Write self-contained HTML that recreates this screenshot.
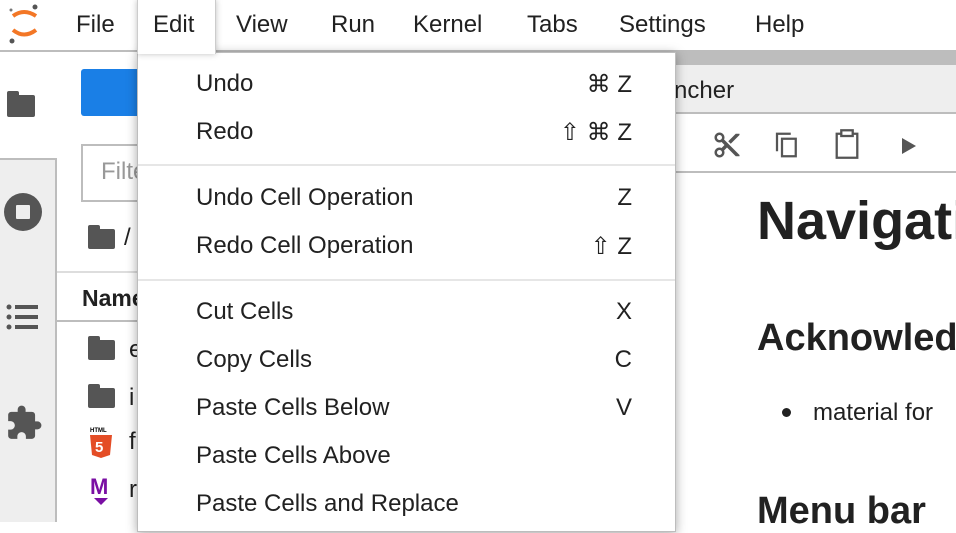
<!DOCTYPE html>
<html><head><meta charset="utf-8"><style>
*{margin:0;padding:0;box-sizing:border-box}
body{width:956px;height:522px;overflow:hidden;position:relative;background:#fff;font-family:"Liberation Sans","DejaVu Sans",sans-serif;color:#212121}
.a{position:absolute}
.mt{position:absolute;top:11px;font-size:24px;color:#212121}
.mi{position:absolute;left:196px;font-size:24px;color:#212121;white-space:nowrap}
.sc{position:absolute;font-size:24px;color:#212121;text-align:right;white-space:nowrap}
.fold{position:absolute;width:28px;height:22px;background:#555;border-radius:2px}
.fold:before{content:"";position:absolute;left:0;top:-4px;width:12px;height:6px;background:#555;border-radius:2px 2px 0 0}
</style></head><body>
<div class="a" style="left:0;top:0;width:956px;height:52px;background:#fff;border-bottom:2px solid #bdbdbd"></div>
<svg class="a" style="left:6px;top:2px" width="36" height="44" viewBox="0 0 36 44">
<path d="M7 14 Q18 6 30 14" stroke="#f37726" stroke-width="4" fill="none"/>
<path d="M7 28 Q18 37 30 28" stroke="#f37726" stroke-width="4" fill="none"/>
<circle cx="29" cy="5" r="2.5" fill="#555"/><circle cx="5" cy="8" r="1.5" fill="#777"/><circle cx="6" cy="39" r="2.5" fill="#555"/>
</svg>
<div class="mt" style="left:76px">File</div>
<div class="a" style="left:137px;top:0;width:79px;height:54px;background:#fff;border-left:1px solid #ccc;border-right:1px solid #ccc;box-shadow:0 0 6px rgba(0,0,0,.25);z-index:3"></div>
<div class="mt" style="left:153px;z-index:4">Edit</div>
<div class="mt" style="left:236px">View</div>
<div class="mt" style="left:331px">Run</div>
<div class="mt" style="left:413px">Kernel</div>
<div class="mt" style="left:527px">Tabs</div>
<div class="mt" style="left:619px">Settings</div>
<div class="mt" style="left:755px">Help</div>
<div class="a" style="left:0;top:158px;width:57px;height:364px;background:#eee;border-right:2px solid #bdbdbd;border-top:2px solid #bdbdbd"></div>
<div class="fold" style="left:7px;top:95px"></div>
<svg class="a" style="left:3px;top:192px" width="40" height="40"><circle cx="20" cy="20" r="19" fill="#555"/><rect x="13" y="13" width="14" height="14" fill="#eee" rx="1"/></svg>
<svg class="a" style="left:6px;top:304px" width="34" height="26"><g fill="#555"><circle cx="3" cy="3" r="2.5"/><circle cx="3" cy="13" r="2.5"/><circle cx="3" cy="23" r="2.5"/><rect x="9" y="1" width="23" height="4"/><rect x="9" y="11" width="23" height="4"/><rect x="9" y="21" width="23" height="4"/></g></svg>
<svg class="a" style="left:5px;top:404px" width="38" height="38" viewBox="0 0 24 24"><path fill="#555" d="M20.5 11H19V7c0-1.1-.9-2-2-2h-4V3.5a2.5 2.5 0 0 0-5 0V5H4c-1.1 0-2 .9-2 2v3.8h1.5c1.5 0 2.7 1.2 2.7 2.7S5 16.2 3.5 16.2H2V20c0 1.1.9 2 2 2h3.8v-1.5c0-1.5 1.2-2.7 2.7-2.7s2.7 1.2 2.7 2.7V22H17c1.1 0 2-.9 2-2v-4h1.5a2.5 2.5 0 0 0 0-5z"/></svg>
<div class="a" style="left:81px;top:69px;width:70px;height:47px;background:#1a7fe6;border-radius:3px"></div>
<div class="a" style="left:81px;top:144px;width:70px;height:58px;border:2px solid #bdbdbd"></div>
<div class="a" style="left:101px;top:158px;font-size:24px;color:#999">Filter</div>
<div class="fold" style="left:88px;top:229px;width:27px;height:20px"></div>
<div class="a" style="left:124px;top:224px;font-size:24px">/</div>
<div class="a" style="left:57px;top:271px;width:100px;height:51px;border-top:2px solid #ddd;border-bottom:2px solid #bdbdbd"></div>
<div class="a" style="left:82px;top:285px;font-size:23px;font-weight:bold">Name</div>
<div class="fold" style="left:88px;top:340px;width:27px;height:20px"></div>
<div class="a" style="left:129px;top:336px;font-size:24px">e</div>
<div class="fold" style="left:88px;top:388px;width:27px;height:20px"></div>
<div class="a" style="left:129px;top:384px;font-size:24px">i</div>
<svg class="a" style="left:88px;top:426px" width="26" height="34"><text x="2" y="6" font-size="6" font-weight="bold" font-family="Liberation Sans">HTML</text><path d="M2 9h22l-2 20-9 3-9-3z" fill="#e44d26"/><text x="7" y="26" font-size="15" font-weight="bold" fill="#fff" font-family="Liberation Sans">5</text></svg>
<div class="a" style="left:129px;top:428px;font-size:24px">f</div>
<svg class="a" style="left:90px;top:474px" width="22" height="34"><text x="0" y="20" font-size="22" font-weight="bold" fill="#7a0fa3" font-family="Liberation Sans">M</text><path d="M4 24h14l-7 7z" fill="#7a0fa3"/></svg>
<div class="a" style="left:129px;top:476px;font-size:24px">r</div>
<div class="a" style="left:640px;top:52px;width:316px;height:13px;background:#bdbdbd"></div>
<div class="a" style="left:640px;top:65px;width:316px;height:49px;background:#eee;border-bottom:2px solid #bdbdbd"></div>
<div class="a" style="left:634px;top:77px;font-size:24px">Launcher</div>
<div class="a" style="left:640px;top:171px;width:316px;height:2px;background:#bdbdbd"></div>
<svg class="a" style="left:712px;top:130px" width="30" height="30" viewBox="0 0 24 24"><path fill="#555" d="M9.64 7.64c.23-.5.36-1.050.36-1.64 0-2.21-1.79-4-4-4S2 3.79 2 6s1.79 4 4 4c.59 0 1.14-.13 1.64-.36L10 12l-2.36 2.36C7.14 14.130 6.59 14 6 14c-2.21 0-4 1.79-4 4s1.79 4 4 4 4-1.79 4-4c0-.59-.13-1.14-.36-1.64L12 14l7 7h3v-1L9.64 7.64zM6 8c-1.1 0-2-.89-2-2s.9-2 2-2 2 .89 2 2-.9 2-2 2zm0 12c-1.1 0-2-.89-2-2s.9-2 2-2 2 .89 2 2-.9 2-2 2zM19 3l-6 6 2 2 7-7V3z"/></svg>
<svg class="a" style="left:772px;top:130px" width="30" height="30" viewBox="0 0 24 24"><path fill="none" stroke="#555" stroke-width="1.8" d="M4 17V3h11M8 7h11v14H8z"/></svg>
<svg class="a" style="left:833px;top:128px" width="28" height="32" viewBox="0 0 24 28"><path fill="none" stroke="#555" stroke-width="2" d="M7 5H3v21h18V5h-4"/><rect x="7" y="2" width="10" height="5" fill="none" stroke="#555" stroke-width="2"/></svg>
<svg class="a" style="left:900px;top:137px" width="18" height="18"><path d="M2 1l14 8-14 8z" fill="#555"/></svg>
<div class="a" style="left:757px;top:190px;font-size:54px;font-weight:bold;white-space:nowrap">Navigation</div>
<div class="a" style="left:757px;top:317px;font-size:38px;font-weight:bold;white-space:nowrap">Acknowledgement</div>
<div class="a" style="left:782px;top:408px;width:9px;height:9px;border-radius:50%;background:#212121"></div>
<div class="a" style="left:813px;top:399px;font-size:24px;white-space:nowrap">material for</div>
<div class="a" style="left:757px;top:490px;font-size:38px;font-weight:bold;white-space:nowrap">Menu bar</div>
<div class="a" style="left:137px;top:52px;width:539px;height:480px;background:#fff;border:1px solid #bdbdbd;box-shadow:0 2px 10px rgba(0,0,0,.35);z-index:2">
<div class="a" style="left:0;top:111px;width:537px;height:2px;background:#e6e6e6"></div>
<div class="a" style="left:0;top:226px;width:537px;height:2px;background:#e6e6e6"></div>
</div>
<div style="position:absolute;left:0;top:0;width:956px;height:522px;z-index:5">
<div class="mi" style="top:70px">Undo</div><div class="sc" style="top:70px;left:532px;width:100px">⌘ Z</div>
<div class="mi" style="top:118px">Redo</div><div class="sc" style="top:118px;left:512px;width:120px">⇧ ⌘ Z</div>
<div class="mi" style="top:184px">Undo Cell Operation</div><div class="sc" style="top:184px;left:532px;width:100px">Z</div>
<div class="mi" style="top:232px">Redo Cell Operation</div><div class="sc" style="top:232px;left:532px;width:100px">⇧ Z</div>
<div class="mi" style="top:298px">Cut Cells</div><div class="sc" style="top:298px;left:532px;width:100px">X</div>
<div class="mi" style="top:346px">Copy Cells</div><div class="sc" style="top:346px;left:532px;width:100px">C</div>
<div class="mi" style="top:394px">Paste Cells Below</div><div class="sc" style="top:394px;left:532px;width:100px">V</div>
<div class="mi" style="top:442px">Paste Cells Above</div>
<div class="mi" style="top:490px">Paste Cells and Replace</div>
</div>
</body></html>
